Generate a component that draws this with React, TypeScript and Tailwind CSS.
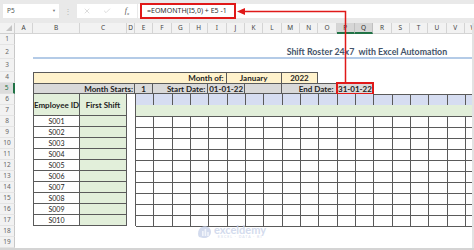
import React from "react";
import { X, Check } from "lucide-react";

const LETTERS = "ABCDEFGHIJKLMNOPQRSTUVW".split("");
const ROW_H = [
  "h-[11px]",
  "h-[14px]",
  "h-[13px]",
  ...Array.from({ length: 16 }, () => "h-[11px]"),
];
const IDS = ["S001", "S002", "S003", "S004", "S005", "S006", "S007", "S008", "S009", "S010"];
const NINETEEN = Array.from({ length: 19 }, (_, i) => i);
const BIG = Array.from({ length: 190 }, (_, i) => i);

function FormulaBar() {
  return (
    <div className="flex h-[23px] items-start bg-[#e9e9e9] pl-[3px] pt-[4px] font-['Noto_Sans',sans-serif]">
      <div className="flex h-[14px] w-[56px] items-center justify-between bg-white pl-[4px] pr-[3px] text-[6.5px] text-[#555]">
        <span>P5</span>
        <span className="text-[4px] text-[#777]">▼</span>
      </div>
      <div className="flex h-[14px] w-[18px] items-center justify-center text-[8px] text-[#b8b8b8]">⋮</div>
      <div className="flex h-[14px] w-[60px] items-center bg-white">
        <div className="flex w-[20px] justify-center">
          <X size={8} strokeWidth={1.4} color="#b5b5b5" />
        </div>
        <div className="flex w-[20px] justify-center">
          <Check size={8} strokeWidth={1.4} color="#b5b5b5" />
        </div>
        <div className="flex w-[20px] items-end justify-center font-['Liberation_Serif',serif] text-[#555]">
          <span className="text-[8px] italic">f</span>
          <span className="text-[5px] italic">x</span>
        </div>
      </div>
      <div className="ml-[1px] flex h-[14px] flex-1 items-center bg-white">
        <div className="ml-[2px] flex h-[16px] w-[96px] shrink-0 items-center border-2 border-[#e01919] pl-[5px] text-[7px] whitespace-pre text-[#333]">
          =EOMONTH(I5,0) + E5 -1
        </div>
      </div>
    </div>
  );
}

function Sheet() {
  return (
    <div className="grid grid-cols-[15px_18px_47px_47px_8px_repeat(19,18.33px)] grid-rows-[11px_11px_14px_13px_repeat(16,11px)] text-[#222]">
      {/* column headers */}
      <div className="col-start-1 row-start-1 flex items-end justify-end border-r border-b border-[#d0d0d0] bg-[#f2f2f2] pr-[2px] pb-[2px]">
        <svg width="6" height="6" viewBox="0 0 6 6">
          <path d="M6 0V6H0Z" fill="#c4c4c4" />
        </svg>
      </div>
      {LETTERS.map((l) => (
        <div
          key={l}
          className={
            l === "P" || l === "Q"
              ? "row-start-1 flex items-center justify-center border-r border-b-2 border-r-[#c0c0c0] border-b-[#217346] bg-[#d6d6d6] font-['Noto_Sans',sans-serif] text-[6.5px] text-[#2c2c2c]"
              : "row-start-1 flex items-center justify-center border-r border-b border-[#d4d4d4] bg-[#f2f2f2] font-['Noto_Sans',sans-serif] text-[6.5px] text-[#444]"
          }
        >
          {l}
        </div>
      ))}

      {/* row headers */}
      <div className="col-start-1 row-start-2 row-span-19 flex flex-col">
        {ROW_H.map((h, i) => (
          <div
            key={i}
            className={
              i === 4
                ? `${h} flex items-center justify-center border-r-2 border-b border-r-[#217346] border-b-[#e0e0e0] bg-[#dcdcdc] font-['Noto_Sans',sans-serif] text-[6.5px] text-[#217346]`
                : `${h} flex items-center justify-center border-r border-b border-r-[#c8c8c8] border-b-[#e4e4e4] bg-[#f2f2f2] font-['Noto_Sans',sans-serif] text-[6.5px] text-[#666]`
            }
          >
            {i + 1}
          </div>
        ))}
      </div>

      {/* title */}
      <div className="col-start-14 col-span-11 row-start-3 flex items-center whitespace-pre pl-[5px] text-[8.8px] font-bold text-[#44546a]">
        Shift Roster 24x7  with Excel Automation
      </div>
      <div className="col-start-3 col-span-22 row-start-3 h-[2px] self-end bg-[#b4cbe7]" />

      {/* row 4 */}
      <div className="col-start-3 col-span-8 row-start-5 flex items-center justify-end border-t border-l border-r border-[#5a5a5a] bg-[#fff2cc] pr-[2px] text-[8px] font-bold">
        Month of:
      </div>
      <div className="col-start-11 col-span-3 row-start-5 flex items-center justify-center border-t border-r border-[#5a5a5a] bg-[#fff2cc] text-[8px] font-bold">
        January
      </div>
      <div className="col-start-14 col-span-2 row-start-5 flex items-center justify-center border-t border-r border-[#5a5a5a] bg-[#fff2cc] text-[8px] font-bold">
        2022
      </div>

      {/* row 5 */}
      <div className="col-start-3 col-span-3 row-start-6 flex items-center justify-end border-t border-l border-r border-b border-[#5a5a5a] bg-[#d9d9d9] pr-[1px] text-[8px] font-bold">
        Month Starts:
      </div>
      <div className="col-start-6 row-start-6 flex items-center justify-center border-t border-r border-b border-[#5a5a5a] bg-[#d9d9d9] text-[8px] font-bold">
        1
      </div>
      <div className="col-start-7 col-span-3 row-start-6 flex items-center justify-end border-t border-r border-b border-[#5a5a5a] bg-[#d9d9d9] pr-[2px] text-[8px] font-bold">
        Start Date:
      </div>
      <div className="col-start-10 col-span-2 row-start-6 flex items-center justify-center border-t border-r border-b border-[#5a5a5a] bg-[#d9d9d9] text-[8px] font-bold">
        01-01-22
      </div>
      <div className="col-start-12 col-span-2 row-start-6 border-t border-r border-b border-[#5a5a5a] bg-[#d9d9d9]" />
      <div className="col-start-14 col-span-3 row-start-6 flex items-center justify-end border-t border-r border-b border-[#5a5a5a] bg-[#d9d9d9] pr-[2px] text-[8px] font-bold">
        End Date:
      </div>
      <div className="col-start-17 col-span-2 row-start-6 -mx-[1px] -my-[1px] flex items-center justify-center border-2 border-[#e01919] bg-[#d9d9d9] text-[8px] font-bold">
        31-01-22
      </div>

      {/* rows 6-7 */}
      <div className="col-start-3 row-start-7 row-span-2 flex items-center justify-center border-l border-r border-b border-[#5a5a5a] bg-[#e2efda] text-[8px] font-bold whitespace-nowrap">
        Employee ID
      </div>
      <div className="col-start-4 row-start-7 row-span-2 flex items-center justify-center border-r border-b border-[#5a5a5a] bg-[#e2efda] text-[8px] font-bold">
        First Shift
      </div>
      <div className="col-start-6 col-span-19 row-start-7 row-span-2 flex flex-col border-l border-[#5a5a5a]">
        <div className="flex h-[11px]">
          {NINETEEN.map((i) => (
            <div key={i} className="h-[11px] w-[18.33px] shrink-0 border-r border-[#5a5a5a] bg-[#d6ddf1]" />
          ))}
        </div>
        <div className="h-[11px] bg-[#e2efda]" />
      </div>
      <div className="col-start-19 col-span-6 row-start-7 h-px bg-[#5a5a5a]" />

      {/* rows 8-17 */}
      <div className="col-start-3 row-start-9 row-span-10 flex flex-col">
        {IDS.map((id) => (
          <div key={id} className="flex h-[11px] items-center justify-center border-l border-r border-b border-[#5a5a5a] text-[7px]">
            {id}
          </div>
        ))}
      </div>
      <div className="col-start-4 row-start-9 row-span-10 flex flex-col">
        {IDS.map((id) => (
          <div key={id} className="h-[11px] border-r border-b border-[#5a5a5a] bg-[#e2efda]" />
        ))}
      </div>
      <div className="col-start-6 col-span-19 row-start-9 row-span-10 grid grid-cols-[repeat(19,18.33px)] grid-rows-[repeat(10,11px)] border-t border-l border-[#5a5a5a]">
        {BIG.map((i) => (
          <div key={i} className="border-r border-b border-[#5a5a5a]" />
        ))}
      </div>
    </div>
  );
}

export default function App() {
  return (
    <div className="relative h-[250px] w-[474px] overflow-hidden bg-white font-['Lato','Liberation_Sans',sans-serif]">
      <FormulaBar />
      <Sheet />
      <div className="h-[2px] bg-[#d4d4d4]" />

      {/* red arrow */}
      <svg className="pointer-events-none absolute left-0 top-0" width="474" height="250" viewBox="0 0 474 250">
        <path d="M345.5 83 V11.5 H243" fill="none" stroke="#e01919" strokeWidth="1.5" />
        <path d="M237 11.5 L245 8 L245 15 Z" fill="#e01919" />
      </svg>

      {/* watermark */}
      <div className="pointer-events-none absolute left-[197px] top-[224px] flex items-center gap-[2px] opacity-80">
        <svg width="15" height="14" viewBox="0 0 15 14">
          <path d="M2 12 C0 9 1 3 6 1.5 C10 0.5 14 3 14 7 C14 11 10 13.5 6 13 Z" fill="#c9d3ea" />
          <rect x="5" y="6" width="1.6" height="5" fill="#eef2fa" />
          <rect x="7.6" y="4" width="1.6" height="7" fill="#eef2fa" />
          <rect x="10.2" y="7" width="1.6" height="4" fill="#eef2fa" />
        </svg>
        <div className="flex flex-col items-center gap-[1px] leading-none">
          <span className="text-[11px] font-bold text-[#c9d3ea]">exceldemy</span>
          <span className="text-[3.5px] tracking-[1px] text-[#c9d3ea]">EXCEL · DATA · BI</span>
        </div>
      </div>
      <div className="absolute right-0 top-[23px] h-[225px] w-[2px] bg-[#e2e2e2]" />
    </div>
  );
}
